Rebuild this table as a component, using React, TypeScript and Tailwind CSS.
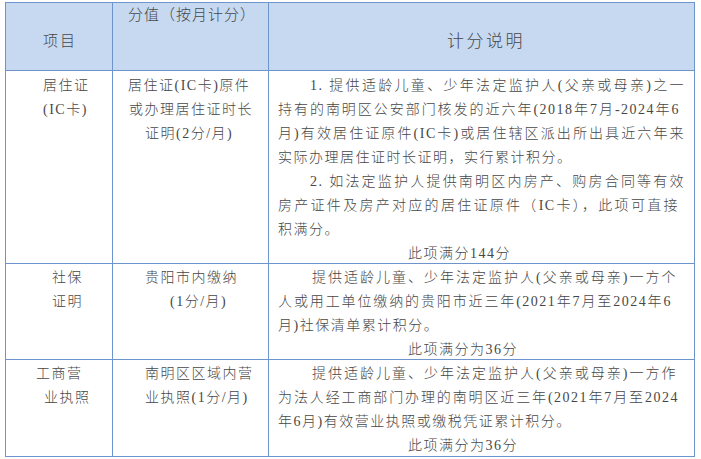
import * as React from "react"

const FONT = "font-['Liberation_Serif','Noto_Sans_CJK_SC',serif]"

interface LineProps {
  children: React.ReactNode
  pl: number
  w?: number
}

// one text line, optionally stretched across a fixed width like the justified source
const Line: React.FC<LineProps> = ({ children, pl, w }) => {
  if (w) {
    return (
      <div style={{ marginLeft: pl, width: w }} className="whitespace-nowrap text-justify [text-align-last:justify]">
        {children}
      </div>
    )
  }
  return (
    <div style={{ paddingLeft: pl }} className="whitespace-nowrap">
      {children}
    </div>
  )
}

const Cell: React.FC<{ children?: React.ReactNode; className?: string }> = ({ children, className = "" }) => (
  <div className={`border-r border-b border-[#6d94cc] ${className}`}>{children}</div>
)

export default function App() {
  return (
    <div className={`w-[701px] h-[459px] bg-white pl-[5px] pt-[2px] text-[#474747] font-light ${FONT}`}>
      <div className="grid w-fit grid-cols-[107px_156px_426px] grid-rows-[68px_193px_96px_97px] border-l border-t border-[#6d94cc] text-[14px] leading-[24px] tracking-[1.5px]">
        {/* header */}
        <Cell className="bg-[#c6d9f1] pt-[26px] text-[15px] tracking-[2px]">
          <Line pl={37}>项目</Line>
        </Cell>
        <Cell className="bg-[#c6d9f1] pt-0 text-[15px] tracking-[1px]">
          <Line pl={15}>分值（按月计分）</Line>
        </Cell>
        <Cell className="bg-[#c6d9f1] pt-[27px] text-[17px] tracking-[2.5px]">
          <Line pl={178}>计分说明</Line>
        </Cell>

        {/* 居住证 */}
        <Cell className="pt-[3px]">
          <Line pl={37}>居住证</Line>
          <Line pl={37}>(IC卡)</Line>
        </Cell>
        <Cell className="pt-[3px]">
          <Line pl={15}>居住证(IC卡)原件</Line>
          <Line pl={16}>或办理居住证时长</Line>
          <Line pl={32}>证明(2分/月)</Line>
        </Cell>
        <Cell className="pt-[3px]">
          <Line pl={41} w={375}>1. 提供适龄儿童、少年法定监护人(父亲或母亲)之一</Line>
          <Line pl={9} w={402}>持有的南明区公安部门核发的近六年(2018年7月-2024年6</Line>
          <Line pl={9} w={407}>月)有效居住证原件(IC卡)或居住辖区派出所出具近六年来</Line>
          <Line pl={9}>实际办理居住证时长证明，实行累计积分。</Line>
          <Line pl={41} w={375}>2. 如法定监护人提供南明区内房产、购房合同等有效</Line>
          <Line pl={9} w={401}>房产证件及房产对应的居住证原件（IC卡），此项可直接</Line>
          <Line pl={9}>积满分。</Line>
          <Line pl={139}>此项满分144分</Line>
        </Cell>

        {/* 社保证明 */}
        <Cell className="pt-[2px]">
          <Line pl={46}>社保</Line>
          <Line pl={46}>证明</Line>
        </Cell>
        <Cell className="pt-[2px]">
          <Line pl={32}>贵阳市内缴纳</Line>
          <Line pl={57}>(1分/月)</Line>
        </Cell>
        <Cell className="pt-[2px]">
          <Line pl={43} w={365}>提供适龄儿童、少年法定监护人(父亲或母亲)一方个</Line>
          <Line pl={9} w={394}>人或用工单位缴纳的贵阳市近三年(2021年7月至2024年6</Line>
          <Line pl={9}>月)社保清单累计积分。</Line>
          <Line pl={139}>此项满分为36分</Line>
        </Cell>

        {/* 工商营业执照 */}
        <Cell className="pt-[2px]">
          <Line pl={30}>工商营</Line>
          <Line pl={38}>业执照</Line>
        </Cell>
        <Cell className="pt-[2px]">
          <Line pl={32}>南明区区域内营</Line>
          <Line pl={32}>业执照(1分/月)</Line>
        </Cell>
        <Cell className="pt-[2px]">
          <Line pl={43} w={365}>提供适龄儿童、少年法定监护人(父亲或母亲)一方作</Line>
          <Line pl={9} w={401}>为法人经工商部门办理的南明区近三年(2021年7月至2024</Line>
          <Line pl={9}>年6月)有效营业执照或缴税凭证累计积分。</Line>
          <Line pl={139}>此项满分为36分</Line>
        </Cell>
      </div>
    </div>
  )
}
